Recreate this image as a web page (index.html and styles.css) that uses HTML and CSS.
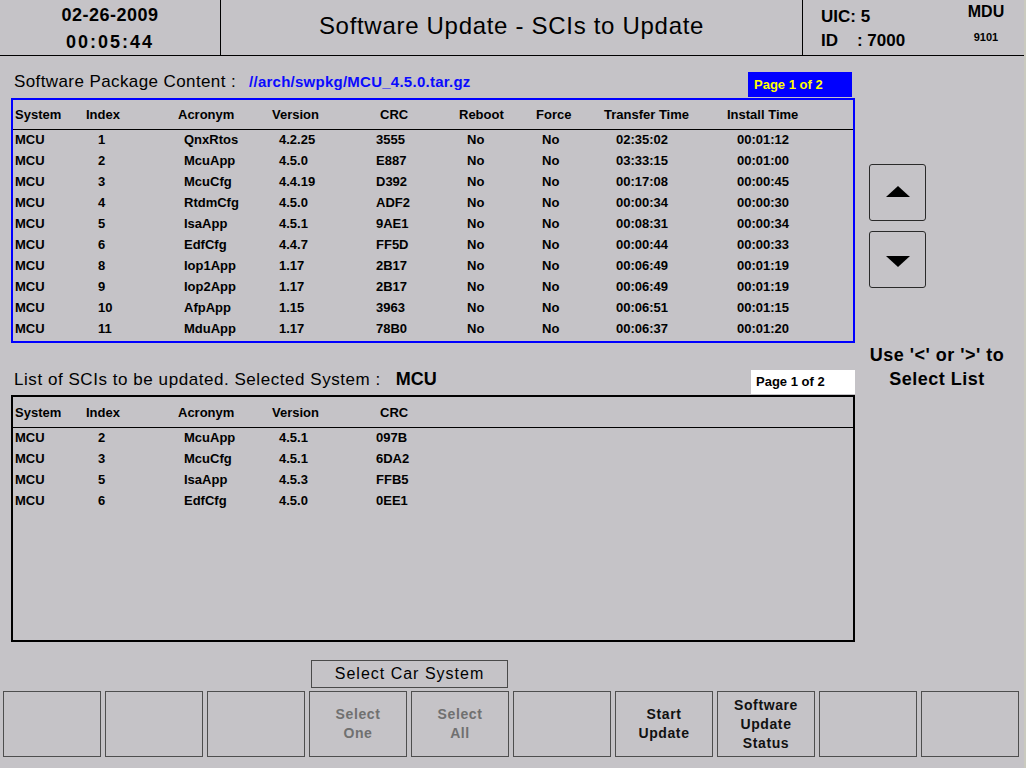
FILE: index.html
```html
<!DOCTYPE html>
<html>
<head>
<meta charset="utf-8">
<title>Software Update - SCIs to Update</title>
<link rel="stylesheet" href="styles.css">
</head>
<body>
<div class="screen">
  <header class="hdr">
    <div class="hdr-date">
      <div class="date">02-26-2009</div>
      <div class="time">00:05:44</div>
    </div>
    <div class="hdr-title">Software Update - SCIs to Update</div>
    <div class="hdr-info">
      <div class="uic">
        <div>UIC: 5</div>
        <div class="id">ID    : 7000</div>
      </div>
      <div class="unit">
        <div class="mdu">MDU</div>
        <div class="num">9101</div>
      </div>
    </div>
  </header>

  <div class="main">
    <div class="left">
      <div class="sec-head first">
        <div class="sec-title">Software Package Content :<span class="path">//arch/swpkg/MCU_4.5.0.tar.gz</span></div>
        <div class="page page-blue">Page 1 of 2</div>
      </div>
      <div class="tbl tbl-blue">
        <div class="thead cols-h">
          <div>System</div><div>Index</div><div>Acronym</div><div>Version</div><div>CRC</div><div>Reboot</div><div>Force</div><div>Transfer Time</div><div>Install Time</div>
        </div>
        <div class="tbody">
          <div class="row cols-d"><div>MCU</div><div>1</div><div>QnxRtos</div><div>4.2.25</div><div>3555</div><div>No</div><div>No</div><div>02:35:02</div><div>00:01:12</div></div>
          <div class="row cols-d"><div>MCU</div><div>2</div><div>McuApp</div><div>4.5.0</div><div>E887</div><div>No</div><div>No</div><div>03:33:15</div><div>00:01:00</div></div>
          <div class="row cols-d"><div>MCU</div><div>3</div><div>McuCfg</div><div>4.4.19</div><div>D392</div><div>No</div><div>No</div><div>00:17:08</div><div>00:00:45</div></div>
          <div class="row cols-d"><div>MCU</div><div>4</div><div>RtdmCfg</div><div>4.5.0</div><div>ADF2</div><div>No</div><div>No</div><div>00:00:34</div><div>00:00:30</div></div>
          <div class="row cols-d"><div>MCU</div><div>5</div><div>IsaApp</div><div>4.5.1</div><div>9AE1</div><div>No</div><div>No</div><div>00:08:31</div><div>00:00:34</div></div>
          <div class="row cols-d"><div>MCU</div><div>6</div><div>EdfCfg</div><div>4.4.7</div><div>FF5D</div><div>No</div><div>No</div><div>00:00:44</div><div>00:00:33</div></div>
          <div class="row cols-d"><div>MCU</div><div>8</div><div>Iop1App</div><div>1.17</div><div>2B17</div><div>No</div><div>No</div><div>00:06:49</div><div>00:01:19</div></div>
          <div class="row cols-d"><div>MCU</div><div>9</div><div>Iop2App</div><div>1.17</div><div>2B17</div><div>No</div><div>No</div><div>00:06:49</div><div>00:01:19</div></div>
          <div class="row cols-d"><div>MCU</div><div>10</div><div>AfpApp</div><div>1.15</div><div>3963</div><div>No</div><div>No</div><div>00:06:51</div><div>00:01:15</div></div>
          <div class="row cols-d"><div>MCU</div><div>11</div><div>MduApp</div><div>1.17</div><div>78B0</div><div>No</div><div>No</div><div>00:06:37</div><div>00:01:20</div></div>
        </div>
      </div>

      <div class="sec-head second">
        <div class="sec-title wide">List of SCIs to be updated. Selected System :<span class="sys">MCU</span></div>
        <div class="page page-white">Page 1 of 2</div>
      </div>
      <div class="tbl tbl-black">
        <div class="thead cols-h">
          <div>System</div><div>Index</div><div>Acronym</div><div>Version</div><div>CRC</div>
        </div>
        <div class="tbody">
          <div class="row cols-d"><div>MCU</div><div>2</div><div>McuApp</div><div>4.5.1</div><div>097B</div></div>
          <div class="row cols-d"><div>MCU</div><div>3</div><div>McuCfg</div><div>4.5.1</div><div>6DA2</div></div>
          <div class="row cols-d"><div>MCU</div><div>5</div><div>IsaApp</div><div>4.5.3</div><div>FFB5</div></div>
          <div class="row cols-d"><div>MCU</div><div>6</div><div>EdfCfg</div><div>4.5.0</div><div>0EE1</div></div>
        </div>
      </div>
    </div>

    <div class="right">
      <div class="arrow-btn up">
        <svg width="24" height="11" viewBox="0 0 24 11"><polygon points="0,11 12,0 24,11" fill="#000"/></svg>
      </div>
      <div class="arrow-btn down">
        <svg width="24" height="11" viewBox="0 0 24 11"><polygon points="0,0 24,0 12,11" fill="#000"/></svg>
      </div>
      <div class="hint">Use '&lt;' or '&gt;' to<br>Select List</div>
    </div>
  </div>

  <div class="footer">
    <div class="car-sys">Select Car System</div>
    <div class="softkeys">
      <div class="key"></div>
      <div class="key"></div>
      <div class="key"></div>
      <div class="key disabled">Select<br>One</div>
      <div class="key disabled">Select<br>All</div>
      <div class="key"></div>
      <div class="key">Start<br>Update</div>
      <div class="key">Software<br>Update<br>Status</div>
      <div class="key"></div>
      <div class="key"></div>
    </div>
  </div>
</div>
</body>
</html>
```

FILE: styles.css
```css
* { box-sizing: border-box; }

html, body {
  margin: 0;
  padding: 0;
}

body {
  width: 1026px;
  height: 768px;
  overflow: hidden;
  background: #c5c3c7;
  font-family: "Liberation Sans", Arial, sans-serif;
  color: #000;
}

.screen {
  width: 1026px;
  height: 768px;
  border-right: 2px solid #cacabf;
}

/* ---------- header ---------- */
.hdr {
  display: grid;
  grid-template-columns: 221px 582px 1fr;
  height: 56px;
  border-bottom: 1px solid #000;
}

.hdr-date {
  border-right: 1px solid #000;
  text-align: center;
  font-weight: bold;
  font-size: 18px;
  line-height: 27px;
  padding-top: 2px;
}

.hdr-date .date { letter-spacing: 0.5px; }
.hdr-date .time { letter-spacing: 2px; }

.hdr-title {
  border-right: 1px solid #000;
  display: flex;
  align-items: center;
  justify-content: center;
  font-size: 24px;
  letter-spacing: 0.7px;
  padding-bottom: 4px;
}

.hdr-info {
  display: flex;
  justify-content: space-between;
}

.uic {
  padding: 5px 0 0 18px;
  font-size: 17px;
  font-weight: bold;
  line-height: 24px;
}

.uic .id { white-space: pre; }

.unit {
  width: 50px;
  margin-right: 13px;
  text-align: center;
  font-weight: bold;
}

.unit .mdu {
  font-size: 16px;
  line-height: 20px;
  padding-top: 2px;
}

.unit .num {
  font-size: 11px;
  line-height: 19px;
  margin-top: 6px;
}

/* ---------- main ---------- */
.main {
  display: flex;
  height: 586px;
}

.left {
  width: 855px;
  padding-left: 11px;
}

.sec-head {
  display: flex;
  justify-content: space-between;
  align-items: flex-start;
}

.sec-head.first {
  margin-top: 16px;
  height: 25px;
}

.sec-head.second {
  margin-top: 27px;
  height: 24px;
}

.sec-title {
  font-size: 17px;
  letter-spacing: 0.4px;
  line-height: 19px;
  padding-left: 3px;
}

.sec-title.wide {
  letter-spacing: 0.55px;
}

.path {
  color: #0a0aff;
  font-weight: bold;
  font-size: 15px;
  letter-spacing: 0.25px;
  margin-left: 13px;
}

.sys {
  font-weight: bold;
  font-size: 18px;
  letter-spacing: 0;
  margin-left: 15px;
}

.page {
  width: 104px;
  height: 25px;
  font-size: 13px;
  font-weight: bold;
  line-height: 25px;
  padding-left: 6px;
}

.page-blue {
  background: #0000ff;
  color: #ffff00;
  margin-right: 3px;
}

.page-white {
  background: #fff;
  color: #000;
  height: 24px;
  line-height: 24px;
  padding-left: 5px;
}

.tbl {
  margin-top: 1px;
  width: 844px;
  border: 2px solid #000;
  font-size: 13px;
  font-weight: bold;
}

.tbl-blue {
  border-color: #0000ff;
  height: 245px;
}

.tbl-black {
  height: 247px;
}

.thead {
  border-bottom: 1px solid #000;
}

.tbl-blue .thead {
  height: 30px;
  line-height: 29px;
}

.tbl-black .thead {
  height: 31px;
  line-height: 31px;
}

.cols-h {
  display: grid;
  grid-template-columns: 71px 92px 94px 108px 79px 77px 68px 123px 1fr;
  padding-left: 2px;
}

.cols-d {
  display: grid;
  grid-template-columns: 83px 86px 95px 97px 91px 75px 74px 121px 1fr;
  padding-left: 2px;
}

.row {
  height: 21px;
  line-height: 20px;
}

/* ---------- right column ---------- */
.right {
  flex: 1;
  padding-left: 14px;
}

.arrow-btn {
  width: 57px;
  height: 57px;
  border: 1px solid #2a2a2a;
  border-radius: 3px;
  display: flex;
  align-items: center;
  justify-content: center;
}

.arrow-btn.up {
  margin-top: 108px;
  padding-bottom: 3px;
}

.arrow-btn.down {
  margin-top: 10px;
  padding-top: 4px;
}

.hint {
  margin-top: 55px;
  width: 136px;
  white-space: nowrap;
  text-align: center;
  font-size: 18px;
  font-weight: bold;
  letter-spacing: 0.5px;
  line-height: 24px;
}

/* ---------- footer ---------- */
.footer {
  padding-top: 18px;
}

.car-sys {
  margin-left: 311px;
  width: 197px;
  height: 28px;
  border: 1px solid #4a4a4a;
  text-align: center;
  font-size: 16px;
  letter-spacing: 1px;
  line-height: 26px;
}

.softkeys {
  display: flex;
  gap: 4px;
  margin-top: 3px;
  padding-left: 3px;
}

.key {
  width: 98px;
  height: 66px;
  border: 1px solid #4e4e4e;
  display: flex;
  align-items: center;
  justify-content: center;
  text-align: center;
  font-size: 14px;
  font-weight: bold;
  letter-spacing: 0.6px;
  line-height: 19px;
  color: #111;
}

.key.disabled {
  color: #707070;
}
```
